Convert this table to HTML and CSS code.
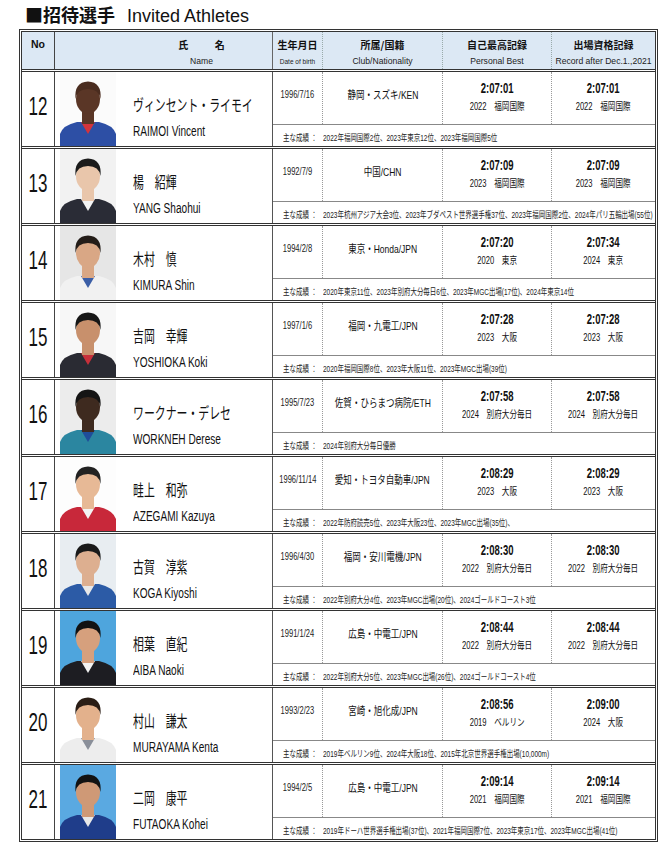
FILE: index.html
```html
<!DOCTYPE html>
<html lang="ja">
<head>
<meta charset="utf-8">
<title>招待選手 Invited Athletes</title>
<link rel="stylesheet" href="styles.css">
</head>
<body>
<div class="page">
  <h1 class="title"><span class="tj">■招待選手</span><span class="te">Invited Athletes</span></h1>
  <div class="table">
    <div class="thead">
      <div class="hc hno"><span class="hj">No</span></div>
      <div class="hc hname"><span class="hj sp">氏 名</span><span class="he">Name</span></div>
      <div class="hc"><span class="hj">生年月日</span><span class="he tiny">Date of birth</span></div>
      <div class="hc"><span class="hj">所属/国籍</span><span class="he">Club/Nationality</span></div>
      <div class="hc"><span class="hj">自己最高記録</span><span class="he">Personal Best</span></div>
      <div class="hc last"><span class="hj">出場資格記録</span><span class="he">Record after Dec.1.,2021</span></div>
    </div>

    <div class="row">
      <div class="no"><span class="sq num">12</span></div>
      <div class="name">
        <svg class="ph p12" viewBox="0 0 56 74" aria-hidden="true"><rect class="bg" width="56" height="74"/><path class="sh" d="M0 74V62Q3 53 17 50L39 50Q53 53 56 62V74Z"/><path class="ac" d="M21 50L28 62L35 50Z"/><rect class="sk" x="22" y="38" width="12" height="14"/><ellipse class="sk" cx="28" cy="27" rx="12" ry="15"/><path class="hr" d="M15.5 27Q14 10 28 9.5Q42 10 40.5 27Q39 17 28 17Q17 17 15.5 27Z"/></svg>
        <div class="names"><span class="sq jp">ヴィンセント・ライモイ</span><span class="sq en">RAIMOI Vincent</span></div>
      </div>
      <div class="info">
        <div class="top">
          <div class="dob"><span class="sq">1996/7/16</span></div>
          <div class="club"><span class="sq">静岡・スズキ/KEN</span></div>
          <div class="rec"><span class="sq time">2:07:01</span><span class="sq venue"><span class="yr">2022</span>福岡国際</span></div>
          <div class="rec last"><span class="sq time">2:07:01</span><span class="sq venue"><span class="yr">2022</span>福岡国際</span></div>
        </div>
        <div class="bottom"><div class="lab"><span class="sq">主な成績 ：</span></div><div class="res"><span class="sq">2022年福岡国際2位、2023年東京12位、2023年福岡国際5位</span></div></div>
      </div>
    </div>

    <div class="row">
      <div class="no"><span class="sq num">13</span></div>
      <div class="name">
        <svg class="ph p13" viewBox="0 0 56 74" aria-hidden="true"><rect class="bg" width="56" height="74"/><path class="sh" d="M0 74V62Q3 53 17 50L39 50Q53 53 56 62V74Z"/><path class="ac" d="M21 50L28 62L35 50Z"/><rect class="sk" x="22" y="38" width="12" height="14"/><ellipse class="sk" cx="28" cy="27" rx="12" ry="15"/><path class="hr" d="M15.5 27Q14 10 28 9.5Q42 10 40.5 27Q39 17 28 17Q17 17 15.5 27Z"/></svg>
        <div class="names"><span class="sq jp">楊　紹輝</span><span class="sq en">YANG Shaohui</span></div>
      </div>
      <div class="info">
        <div class="top">
          <div class="dob"><span class="sq">1992/7/9</span></div>
          <div class="club"><span class="sq">中国/CHN</span></div>
          <div class="rec"><span class="sq time">2:07:09</span><span class="sq venue"><span class="yr">2023</span>福岡国際</span></div>
          <div class="rec last"><span class="sq time">2:07:09</span><span class="sq venue"><span class="yr">2023</span>福岡国際</span></div>
        </div>
        <div class="bottom"><div class="lab"><span class="sq">主な成績 ：</span></div><div class="res"><span class="sq">2023年杭州アジア大会3位、2023年ブダペスト世界選手権37位、2023年福岡国際2位、2024年パリ五輪出場(55位)</span></div></div>
      </div>
    </div>

    <div class="row">
      <div class="no"><span class="sq num">14</span></div>
      <div class="name">
        <svg class="ph p14" viewBox="0 0 56 74" aria-hidden="true"><rect class="bg" width="56" height="74"/><path class="sh" d="M0 74V62Q3 53 17 50L39 50Q53 53 56 62V74Z"/><path class="ac" d="M21 50L28 62L35 50Z"/><rect class="sk" x="22" y="38" width="12" height="14"/><ellipse class="sk" cx="28" cy="27" rx="12" ry="15"/><path class="hr" d="M15.5 27Q14 10 28 9.5Q42 10 40.5 27Q39 17 28 17Q17 17 15.5 27Z"/></svg>
        <div class="names"><span class="sq jp">木村　慎</span><span class="sq en">KIMURA Shin</span></div>
      </div>
      <div class="info">
        <div class="top">
          <div class="dob"><span class="sq">1994/2/8</span></div>
          <div class="club"><span class="sq">東京・Honda/JPN</span></div>
          <div class="rec"><span class="sq time">2:07:20</span><span class="sq venue"><span class="yr">2020</span>東京</span></div>
          <div class="rec last"><span class="sq time">2:07:34</span><span class="sq venue"><span class="yr">2024</span>東京</span></div>
        </div>
        <div class="bottom"><div class="lab"><span class="sq">主な成績 ：</span></div><div class="res"><span class="sq">2020年東京11位、2023年別府大分毎日6位、2023年MGC出場(17位)、2024年東京14位</span></div></div>
      </div>
    </div>

    <div class="row">
      <div class="no"><span class="sq num">15</span></div>
      <div class="name">
        <svg class="ph p15" viewBox="0 0 56 74" aria-hidden="true"><rect class="bg" width="56" height="74"/><path class="sh" d="M0 74V62Q3 53 17 50L39 50Q53 53 56 62V74Z"/><path class="ac" d="M21 50L28 62L35 50Z"/><rect class="sk" x="22" y="38" width="12" height="14"/><ellipse class="sk" cx="28" cy="27" rx="12" ry="15"/><path class="hr" d="M15.5 27Q14 10 28 9.5Q42 10 40.5 27Q39 17 28 17Q17 17 15.5 27Z"/></svg>
        <div class="names"><span class="sq jp">吉岡　幸輝</span><span class="sq en">YOSHIOKA Koki</span></div>
      </div>
      <div class="info">
        <div class="top">
          <div class="dob"><span class="sq">1997/1/6</span></div>
          <div class="club"><span class="sq">福岡・九電工/JPN</span></div>
          <div class="rec"><span class="sq time">2:07:28</span><span class="sq venue"><span class="yr">2023</span>大阪</span></div>
          <div class="rec last"><span class="sq time">2:07:28</span><span class="sq venue"><span class="yr">2023</span>大阪</span></div>
        </div>
        <div class="bottom"><div class="lab"><span class="sq">主な成績 ：</span></div><div class="res"><span class="sq">2020年福岡国際8位、2023年大阪11位、2023年MGC出場(39位)</span></div></div>
      </div>
    </div>

    <div class="row">
      <div class="no"><span class="sq num">16</span></div>
      <div class="name">
        <svg class="ph p16" viewBox="0 0 56 74" aria-hidden="true"><rect class="bg" width="56" height="74"/><path class="sh" d="M0 74V62Q3 53 17 50L39 50Q53 53 56 62V74Z"/><path class="ac" d="M21 50L28 62L35 50Z"/><rect class="sk" x="22" y="38" width="12" height="14"/><ellipse class="sk" cx="28" cy="27" rx="12" ry="15"/><path class="hr" d="M15.5 27Q14 10 28 9.5Q42 10 40.5 27Q39 17 28 17Q17 17 15.5 27Z"/></svg>
        <div class="names"><span class="sq jp">ワークナー・デレセ</span><span class="sq en">WORKNEH Derese</span></div>
      </div>
      <div class="info">
        <div class="top">
          <div class="dob"><span class="sq">1995/7/23</span></div>
          <div class="club"><span class="sq">佐賀・ひらまつ病院/ETH</span></div>
          <div class="rec"><span class="sq time">2:07:58</span><span class="sq venue"><span class="yr">2024</span>別府大分毎日</span></div>
          <div class="rec last"><span class="sq time">2:07:58</span><span class="sq venue"><span class="yr">2024</span>別府大分毎日</span></div>
        </div>
        <div class="bottom"><div class="lab"><span class="sq">主な成績 ：</span></div><div class="res"><span class="sq">2024年別府大分毎日優勝</span></div></div>
      </div>
    </div>

    <div class="row">
      <div class="no"><span class="sq num">17</span></div>
      <div class="name">
        <svg class="ph p17" viewBox="0 0 56 74" aria-hidden="true"><rect class="bg" width="56" height="74"/><path class="sh" d="M0 74V62Q3 53 17 50L39 50Q53 53 56 62V74Z"/><path class="ac" d="M21 50L28 62L35 50Z"/><rect class="sk" x="22" y="38" width="12" height="14"/><ellipse class="sk" cx="28" cy="27" rx="12" ry="15"/><path class="hr" d="M15.5 27Q14 10 28 9.5Q42 10 40.5 27Q39 17 28 17Q17 17 15.5 27Z"/></svg>
        <div class="names"><span class="sq jp">畦上　和弥</span><span class="sq en">AZEGAMI Kazuya</span></div>
      </div>
      <div class="info">
        <div class="top">
          <div class="dob"><span class="sq">1996/11/14</span></div>
          <div class="club"><span class="sq">愛知・トヨタ自動車/JPN</span></div>
          <div class="rec"><span class="sq time">2:08:29</span><span class="sq venue"><span class="yr">2023</span>大阪</span></div>
          <div class="rec last"><span class="sq time">2:08:29</span><span class="sq venue"><span class="yr">2023</span>大阪</span></div>
        </div>
        <div class="bottom"><div class="lab"><span class="sq">主な成績 ：</span></div><div class="res"><span class="sq">2022年防府読売5位、2023年大阪23位、2023年MGC出場(35位)、</span></div></div>
      </div>
    </div>

    <div class="row">
      <div class="no"><span class="sq num">18</span></div>
      <div class="name">
        <svg class="ph p18" viewBox="0 0 56 74" aria-hidden="true"><rect class="bg" width="56" height="74"/><path class="sh" d="M0 74V62Q3 53 17 50L39 50Q53 53 56 62V74Z"/><path class="ac" d="M21 50L28 62L35 50Z"/><rect class="sk" x="22" y="38" width="12" height="14"/><ellipse class="sk" cx="28" cy="27" rx="12" ry="15"/><path class="hr" d="M15.5 27Q14 10 28 9.5Q42 10 40.5 27Q39 17 28 17Q17 17 15.5 27Z"/></svg>
        <div class="names"><span class="sq jp">古賀　淳紫</span><span class="sq en">KOGA Kiyoshi</span></div>
      </div>
      <div class="info">
        <div class="top">
          <div class="dob"><span class="sq">1996/4/30</span></div>
          <div class="club"><span class="sq">福岡・安川電機/JPN</span></div>
          <div class="rec"><span class="sq time">2:08:30</span><span class="sq venue"><span class="yr">2022</span>別府大分毎日</span></div>
          <div class="rec last"><span class="sq time">2:08:30</span><span class="sq venue"><span class="yr">2022</span>別府大分毎日</span></div>
        </div>
        <div class="bottom"><div class="lab"><span class="sq">主な成績 ：</span></div><div class="res"><span class="sq">2022年別府大分4位、2023年MGC出場(20位)、2024ゴールドコースト3位</span></div></div>
      </div>
    </div>

    <div class="row">
      <div class="no"><span class="sq num">19</span></div>
      <div class="name">
        <svg class="ph p19" viewBox="0 0 56 74" aria-hidden="true"><rect class="bg" width="56" height="74"/><path class="sh" d="M0 74V62Q3 53 17 50L39 50Q53 53 56 62V74Z"/><path class="ac" d="M21 50L28 62L35 50Z"/><rect class="sk" x="22" y="38" width="12" height="14"/><ellipse class="sk" cx="28" cy="27" rx="12" ry="15"/><path class="hr" d="M15.5 27Q14 10 28 9.5Q42 10 40.5 27Q39 17 28 17Q17 17 15.5 27Z"/></svg>
        <div class="names"><span class="sq jp">相葉　直紀</span><span class="sq en">AIBA Naoki</span></div>
      </div>
      <div class="info">
        <div class="top">
          <div class="dob"><span class="sq">1991/1/24</span></div>
          <div class="club"><span class="sq">広島・中電工/JPN</span></div>
          <div class="rec"><span class="sq time">2:08:44</span><span class="sq venue"><span class="yr">2022</span>別府大分毎日</span></div>
          <div class="rec last"><span class="sq time">2:08:44</span><span class="sq venue"><span class="yr">2022</span>別府大分毎日</span></div>
        </div>
        <div class="bottom"><div class="lab"><span class="sq">主な成績 ：</span></div><div class="res"><span class="sq">2022年別府大分5位、2023年MGC出場(26位)、2024ゴールドコースト4位</span></div></div>
      </div>
    </div>

    <div class="row">
      <div class="no"><span class="sq num">20</span></div>
      <div class="name">
        <svg class="ph p20" viewBox="0 0 56 74" aria-hidden="true"><rect class="bg" width="56" height="74"/><path class="sh" d="M0 74V62Q3 53 17 50L39 50Q53 53 56 62V74Z"/><path class="ac" d="M21 50L28 62L35 50Z"/><rect class="sk" x="22" y="38" width="12" height="14"/><ellipse class="sk" cx="28" cy="27" rx="12" ry="15"/><path class="hr" d="M15.5 27Q14 10 28 9.5Q42 10 40.5 27Q39 17 28 17Q17 17 15.5 27Z"/></svg>
        <div class="names"><span class="sq jp">村山　謙太</span><span class="sq en">MURAYAMA Kenta</span></div>
      </div>
      <div class="info">
        <div class="top">
          <div class="dob"><span class="sq">1993/2/23</span></div>
          <div class="club"><span class="sq">宮崎・旭化成/JPN</span></div>
          <div class="rec"><span class="sq time">2:08:56</span><span class="sq venue"><span class="yr">2019</span>ベルリン</span></div>
          <div class="rec last"><span class="sq time">2:09:00</span><span class="sq venue"><span class="yr">2024</span>大阪</span></div>
        </div>
        <div class="bottom"><div class="lab"><span class="sq">主な成績 ：</span></div><div class="res"><span class="sq">2019年ベルリン9位、2024年大阪18位、2015年北京世界選手権出場(10,000m)</span></div></div>
      </div>
    </div>

    <div class="row">
      <div class="no"><span class="sq num">21</span></div>
      <div class="name">
        <svg class="ph p21" viewBox="0 0 56 74" aria-hidden="true"><rect class="bg" width="56" height="74"/><path class="sh" d="M0 74V62Q3 53 17 50L39 50Q53 53 56 62V74Z"/><path class="ac" d="M21 50L28 62L35 50Z"/><rect class="sk" x="22" y="38" width="12" height="14"/><ellipse class="sk" cx="28" cy="27" rx="12" ry="15"/><path class="hr" d="M15.5 27Q14 10 28 9.5Q42 10 40.5 27Q39 17 28 17Q17 17 15.5 27Z"/></svg>
        <div class="names"><span class="sq jp">二岡　康平</span><span class="sq en">FUTAOKA Kohei</span></div>
      </div>
      <div class="info">
        <div class="top">
          <div class="dob"><span class="sq">1994/2/5</span></div>
          <div class="club"><span class="sq">広島・中電工/JPN</span></div>
          <div class="rec"><span class="sq time">2:09:14</span><span class="sq venue"><span class="yr">2021</span>福岡国際</span></div>
          <div class="rec last"><span class="sq time">2:09:14</span><span class="sq venue"><span class="yr">2021</span>福岡国際</span></div>
        </div>
        <div class="bottom"><div class="lab"><span class="sq">主な成績 ：</span></div><div class="res"><span class="sq">2019年ドーハ世界選手権出場(37位)、2021年福岡国際7位、2023年東京17位、2023年MGC出場(41位)</span></div></div>
      </div>
    </div>
  </div>
</div>
</body>
</html>
```
FILE: styles.css
```css
* { box-sizing: border-box; }
html, body { margin: 0; padding: 0; background: #fff; }
body {
  font-family: "Liberation Sans", "Noto Sans CJK JP", sans-serif;
  color: #111;
}
.page { padding: 3px 0 0 19px; }

.title {
  margin: 0 0 2px 6px;
  font-size: 18px;
  line-height: 22px;
  font-weight: 500;
  display: flex;
  align-items: baseline;
}
.tj { font-family: "Noto Sans CJK JP", sans-serif; font-weight: 700; }
.te { font-family: "Liberation Sans", sans-serif; font-weight: 400; margin-left: 12px; }

.table {
  width: 639px;
  border: 3px double #333;
}

/* header */
.thead {
  display: grid;
  grid-template-columns: 33px 218px 50px 120px 109px minmax(0, 1fr);
  height: 37px;
  background: #dce8f4;
}
.hc {
  display: flex;
  flex-direction: column;
  align-items: center;
  min-width: 0;
  padding-top: 5px;
  border-right: 1px dotted #9aa;
}
.hc.hno { border-right: 1px solid #444; }
.hc.hname { border-right: 1px solid #666; padding-left: 76px; }
.hc.last { border-right: none; }
.hj {
  font-family: "Noto Sans CJK JP", sans-serif;
  font-weight: 700;
  font-size: 10px;
  line-height: 15px;
  white-space: nowrap;
}
.hno .hj { font-family: "Liberation Sans", sans-serif; font-size: 10.5px; }
.hj.sp { word-spacing: 24px; }
.he {
  font-size: 8.6px;
  line-height: 13px;
  margin-top: 3px;
  white-space: nowrap;
  color: #222;
}
.he.tiny { font-size: 6.5px; }

/* rows */
.row {
  display: grid;
  grid-template-columns: 33px 218px minmax(0, 1fr);
  height: 77px;
  border-top: 3px double #333;
}

.sq {
  display: inline-block;
  white-space: nowrap;
  transform: scaleX(.72);
  transform-origin: center center;
}

.no {
  display: flex;
  align-items: center;
  justify-content: center;
  padding-bottom: 6px;
  border-right: 1px solid #444;
}
.num { font-size: 25px; line-height: 30px; transform: scaleX(.68); }

.name {
  display: flex;
  min-width: 0;
  overflow: hidden;
  border-right: 1px solid #555;
}
.ph { width: 56px; height: 74px; margin-left: 5px; flex: none; display: block; }
.ph .bg { fill: var(--bg); }
.ph .sh { fill: var(--sh); }
.ph .ac { fill: var(--ac); }
.ph .sk { fill: var(--sk); }
.ph .hr { fill: var(--hr); }

.p12 { --bg: #fbfbfb; --sh: #2d4fa5; --ac: #d3343c; --sk: #5a3626; --hr: #4a2c1f; }
.p13 { --bg: #f2f2f2; --sh: #2a2c36; --ac: #f4f4f4; --sk: #e9c6ab; --hr: #1b1b1b; }
.p14 { --bg: #e6e6e6; --sh: #f1f1f1; --ac: #3b5ea6; --sk: #d9a785; --hr: #231c18; }
.p15 { --bg: #f7f7f7; --sh: #2a2b33; --ac: #c7303a; --sk: #c8906c; --hr: #161616; }
.p16 { --bg: #ececec; --sh: #2b86a0; --ac: #1f4d9a; --sk: #3e2a1f; --hr: #151515; }
.p17 { --bg: #fdfdfd; --sh: #c8283a; --ac: #f3f3f3; --sk: #e7b996; --hr: #222; }
.p18 { --bg: #e8edf1; --sh: #2c5ba6; --ac: #e8e8e8; --sk: #ddaf90; --hr: #1a1a1a; }
.p19 { --bg: #4ea5dd; --sh: #1d1d22; --ac: #f2f2f2; --sk: #d6a07d; --hr: #121212; }
.p20 { --bg: #ffffff; --sh: #ededed; --ac: #8a8f99; --sk: #e3b18c; --hr: #2a1d15; }
.p21 { --bg: #5aa9e1; --sh: #1f3d8a; --ac: #e8e8e8; --sk: #cf9976; --hr: #121212; }

.names {
  display: flex;
  flex-direction: column;
  align-items: flex-start;
  padding-top: 22px;
  margin-left: 17px;
}
.names .sq { transform-origin: left center; }
.jp {
  font-family: "Noto Sans CJK JP", sans-serif;
  font-size: 16px;
  line-height: 20px;
  transform: scaleX(.68);
}
.en { font-size: 14px; line-height: 16px; margin-top: 9px; }

.info {
  display: grid;
  grid-template-rows: 52px minmax(0, 1fr);
  grid-template-columns: minmax(0, 1fr);
  min-width: 0;
}
.top {
  display: grid;
  grid-template-columns: 50px 120px 109px minmax(0, 1fr);
  min-width: 0;
}
.top > div { border-right: 1px dotted #999; min-width: 0; overflow: hidden; }
.top > div.last { border-right: none; }

.dob, .club {
  display: flex;
  align-items: center;
  justify-content: center;
  padding-bottom: 8px;
}
.dob .sq { font-size: 10.5px; color: #222; }
.club .sq { font-size: 11.5px; transform: scaleX(.74); }

.rec {
  display: flex;
  flex-direction: column;
  align-items: center;
  padding-top: 8px;
}
.time { font-size: 14px; font-weight: 700; line-height: 16px; transform: scaleX(.68); }
.venue { font-size: 10px; line-height: 14px; margin-top: 4px; transform: scaleX(.76); }
.yr { margin-right: 10px; }

.bottom {
  display: flex;
  align-items: center;
  min-width: 0;
  padding-left: 10px;
  border-top: 1px solid #888;
}
.lab { width: 40px; flex: none; }
.res { flex: 1; min-width: 0; overflow: hidden; }
.bottom .sq {
  font-size: 9px;
  line-height: 12px;
  transform-origin: left center;
  color: #222;
}
```
